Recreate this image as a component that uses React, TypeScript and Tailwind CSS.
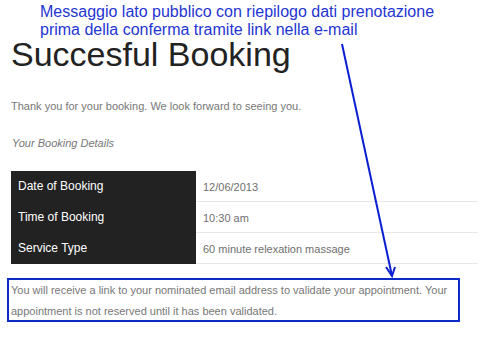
import React from "react";

const rows = [
  ["Date of Booking", "12/06/2013"],
  ["Time of Booking", "10:30 am"],
  ["Service Type", "60 minute relexation massage"],
];

export default function App() {
  return (
    <div
      className="relative w-[487px] h-[348px] bg-white overflow-hidden"
      style={{ fontFamily: '"Liberation Sans", Arial, sans-serif' }}
    >
      <div className="pl-[40px] pt-[3px] text-[16px] leading-[18px] text-[#1f35d2]">
        <div>Messaggio lato pubblico con riepilogo dati prenotazione</div>
        <div>prima della conferma tramite link nella e-mail</div>
      </div>
      <h1 className="pl-[11px] text-[34px] leading-[30px] text-[#222222]">Succesful Booking</h1>
      <p className="pl-[11px] mt-[30px] text-[11px] leading-[14px] text-[#777777]">
        Thank you for your booking. We look forward to seeing you.
      </p>
      <p className="pl-[12px] mt-[23px] text-[11px] leading-[14px] italic text-[#777777]">
        Your Booking Details
      </p>
      <div className="ml-[11px] mt-[21px] w-[467px] flex flex-col">
        {rows.map(([label, value]) => (
          <div key={label} className="flex h-[31px]">
            <div className="w-[185px] bg-[#222222] text-white text-[12px] pl-[7px] pt-[8px] leading-[14px]">
              {label}
            </div>
            <div className="flex-1 border-b border-[#e8e8e8] text-[11px] text-[#6f6f6f] pl-[7px] pt-[9px] leading-[14px]">
              {value}
            </div>
          </div>
        ))}
      </div>
      <div className="ml-[7px] mt-[14px] w-[453px] h-[44px] border-2 border-[#0a2bc8] pl-[2px] text-[11px] leading-[21px] text-[#777777]">
        You will receive a link to your nominated email address to validate your appointment. Your appointment is not reserved until it has been validated.
      </div>
      <svg className="absolute left-0 top-0 pointer-events-none" width="487" height="348">
        <line x1="342" y1="44" x2="392" y2="276" stroke="#0a1fd0" strokeWidth="2" />
        <polyline points="386,267 392,276 395,267" fill="none" stroke="#0a1fd0" strokeWidth="2" />
      </svg>
    </div>
  );
}
